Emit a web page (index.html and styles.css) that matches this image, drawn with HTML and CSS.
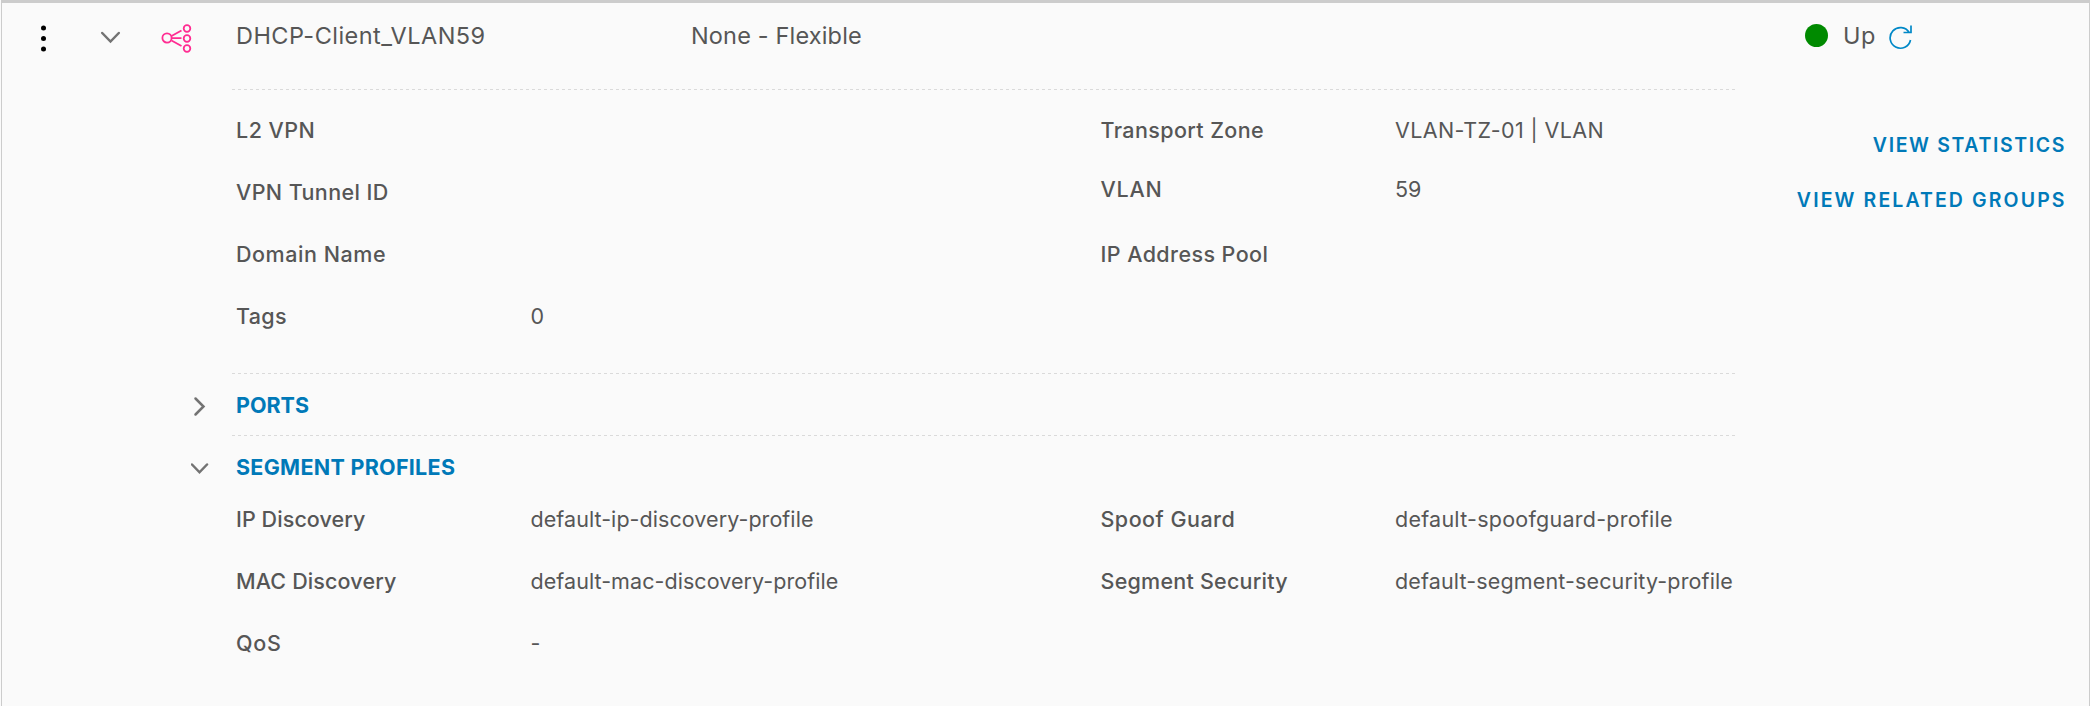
FILE: index.html
```
<!DOCTYPE html>
<html lang="en">
<head>
<meta charset="utf-8">
<title>Segments</title>
<link rel="stylesheet" href="styles.css">
</head>
<body>
<main class="card">
  <header class="summary">
    <svg class="kebab" width="10" height="30" viewBox="0 0 10 30"><circle cx="5.500" cy="5" r="2.500"/><circle cx="5.500" cy="15.500" r="2.500"/><circle cx="5.500" cy="26" r="2.500"/></svg>
    <svg class="chevron toggle" width="22" height="14" viewBox="0 0 22 14"><path d="M2.200 2 10.500 10.500l8.300-8.500"/></svg>
    <svg class="segment-icon" width="32" height="32" viewBox="0 0 32 32"><circle cx="7" cy="16" r="4.600"/><circle cx="27" cy="6.500" r="3.300"/><circle cx="27" cy="16.500" r="3.300"/><circle cx="27" cy="26.500" r="3.300"/><path d="M11.500 14 21.500 8.500M12 16.200h9.500M11.500 18.500 21.500 24"/></svg>
    <span class="name">DHCP-Client_VLAN59</span>
    <span class="connectivity">None - Flexible</span>
    <div class="status">
      <span class="dot"></span>
      <span class="state">Up</span>
      <svg class="refresh" width="26" height="26" viewBox="0 0 26 26"><path d="M22.500 16A10.300 10.300 0 1 1 21.200 8.500M23 1.500V8.500H15.500"/></svg>
    </div>
  </header>
  <div class="body">
    <div class="details">
      <section class="panel fields">
        <dl class="column">
          <div class="field"><dt class="t-l2">L2 VPN</dt><dd></dd></div>
          <div class="field"><dt class="t-tunnel">VPN Tunnel ID</dt><dd></dd></div>
          <div class="field"><dt class="t-domain">Domain Name</dt><dd></dd></div>
          <div class="field"><dt class="t-tags">Tags</dt><dd>0</dd></div>
        </dl>
        <dl class="column">
          <div class="field"><dt class="t-zone">Transport Zone</dt><dd class="t-zone-value">VLAN-TZ-01 | VLAN</dd></div>
          <div class="field raised"><dt class="t-vlan">VLAN</dt><dd>59</dd></div>
          <div class="field"><dt class="t-pool">IP Address Pool</dt><dd></dd></div>
        </dl>
      </section>
      <section class="group">
        <svg class="chevron" width="18" height="22" viewBox="0 0 18 22"><path d="M4.500 2.500 12.500 10.500 4.500 18.500"/></svg>
        <h2 class="panel">PORTS</h2>
      </section>
      <section class="group open">
        <svg class="chevron" width="18" height="22" viewBox="0 0 18 22"><path d="M1 6.500 8.500 14.300 16 6.500"/></svg>
        <h2 class="panel t-profiles">SEGMENT PROFILES</h2>
      </section>
      <section class="profiles">
        <dl class="column">
          <div class="field"><dt class="t-ip">IP Discovery</dt><dd class="t-ip-value">default-ip-discovery-profile</dd></div>
          <div class="field"><dt class="t-mac">MAC Discovery</dt><dd class="t-ip-value">default-mac-discovery-profile</dd></div>
          <div class="field"><dt class="t-qos">QoS</dt><dd>-</dd></div>
        </dl>
        <dl class="column">
          <div class="field"><dt class="t-spoof">Spoof Guard</dt><dd class="t-spoof-value">default-spoofguard-profile</dd></div>
          <div class="field"><dt class="t-security">Segment Security</dt><dd class="t-security-value">default-segment-security-profile</dd></div>
        </dl>
      </section>
    </div>
    <nav class="links">
      <a class="t-statistics">VIEW STATISTICS</a>
      <a class="t-groups">VIEW RELATED GROUPS</a>
    </nav>
  </div>
</main>
</body>
</html>
```

FILE: styles.css
```
* { box-sizing: border-box; }

body {
  margin: 0;
  background: #fafafa;
  color: #565656;
  font-family: Inter, "Liberation Sans", sans-serif;
  font-size: 21.5px;
}

.card {
  height: 706px;
  margin-left: 1px;
  border: solid #ccc;
  border-width: 3px 1px 0;
  background: #fafafa;
  overflow: hidden;
}

svg { display: block; flex: none; fill: none; }

/* Summary row */
.summary {
  display: flex;
  align-items: flex-start;
  height: 86px;
  padding: 20px 0 0 36px;
  font-size: 23.5px;
  line-height: 26px;
  white-space: nowrap;
}
.kebab { fill: #000; }
.chevron { stroke: #737373; stroke-width: 2.5; stroke-linecap: round; stroke-linejoin: miter; }
.toggle { margin: 8px 0 0 52px; }
.segment-icon { margin: -1px 0 0 38px; stroke: #ff2d92; stroke-width: 1.8; }
.name { width: 455px; margin-left: 44px; letter-spacing: 0.46px; }
.connectivity { width: 1114px; letter-spacing: 0.16px; }
.status { display: flex; align-items: flex-start; }
.dot { width: 23px; height: 23px; margin-top: 1px; border-radius: 50%; background: #008a00; }
.state { width: 32px; margin-left: 15px; letter-spacing: 0.5px; }
.refresh { margin: 1px 0 0 13px; stroke: #0088c7; stroke-width: 1.7; }

/* Expanded body */
.body { display: flex; justify-content: space-between; padding: 0 23px 0 186px; }
.details { width: 1549px; }

/* Dashed rule along the top of a panel */
.panel {
  background: repeating-linear-gradient(90deg, #dadada 0 3px, transparent 3px 6px) top left / 100% 1px no-repeat;
}

.fields { display: flex; height: 284px; margin-left: 44px; padding: 10px 0 0 4px; }
.profiles { display: flex; padding-left: 48px; }
.column { flex: none; width: 865px; margin: 0; }
.column + .column { margin-left: -0.5px; }
.field { display: flex; height: 62px; line-height: 62px; white-space: nowrap; }
.raised { line-height: 56px; }
dt { width: 294.5px; font-weight: 500; }
dd { margin: 0; }

.group { display: flex; align-items: flex-start; height: 62px; }
.group.open { height: 53px; }
.group .chevron { margin: 23px 23px 0 3px; }
h2 {
  flex: 1;
  margin: 0;
  padding: 1px 0 0 4px;
  color: #0079b8;
  font-size: 21.5px;
  font-weight: 700;
  line-height: 62px;
}

.links {
  display: flex;
  flex-direction: column;
  align-items: flex-end;
  padding: 29px 1.5px 0 0;
  color: #0079b8;
  font-size: 19.5px;
  font-weight: 600;
  line-height: 55px;
  white-space: nowrap;
}

/* Tracking per label */
.t-l2 { letter-spacing: 0.47px; }
.t-tunnel { letter-spacing: 0.4px; }
.t-domain { letter-spacing: 0.55px; }
.t-tags { letter-spacing: 0.3px; }
.t-zone { letter-spacing: 0.39px; }
.t-zone-value { letter-spacing: 0.4px; }
.t-vlan { letter-spacing: 0.79px; }
.t-pool { letter-spacing: 0.42px; }
.t-profiles { letter-spacing: 0.28px; }
.t-ip { letter-spacing: 0.08px; }
.t-ip-value { letter-spacing: 0.06px; }
.t-mac { letter-spacing: 0.14px; }
.t-qos { letter-spacing: 0.74px; }
.t-spoof { letter-spacing: 0.48px; }
.t-spoof-value { letter-spacing: 0.25px; }
.t-security { letter-spacing: 0.24px; }
.t-security-value { letter-spacing: 0.14px; }
.t-statistics { margin-right: -1.6px; letter-spacing: 1.63px; }
.t-groups { margin-right: -2.1px; letter-spacing: 2.1px; }
```
